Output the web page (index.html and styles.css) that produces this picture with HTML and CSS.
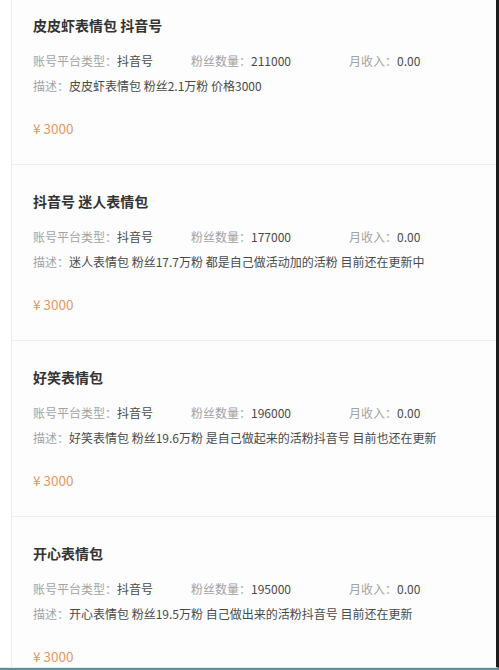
FILE: index.html
```html
<!DOCTYPE html>
<html lang="zh">
<head>
<meta charset="utf-8">
<link rel="stylesheet" href="styles.css">
</head>
<body>
<div class="screen">
  <div class="viewport">
    <div class="list">
      <div class="card">
        <div class="title">皮皮虾表情包 抖音号</div>
        <div class="meta">
          <div><span class="label">账号平台类型：</span><span class="val">抖音号</span></div>
          <div><span class="label">粉丝数量：</span><span class="val">211000</span></div>
          <div><span class="label">月收入：</span><span class="val">0.00</span></div>
        </div>
        <div class="desc"><span class="label">描述：</span><span class="val">皮皮虾表情包 粉丝2.1万粉 价格3000</span></div>
        <div class="price">¥ 3000</div>
      </div>
      <div class="card">
        <div class="title">抖音号 迷人表情包</div>
        <div class="meta">
          <div><span class="label">账号平台类型：</span><span class="val">抖音号</span></div>
          <div><span class="label">粉丝数量：</span><span class="val">177000</span></div>
          <div><span class="label">月收入：</span><span class="val">0.00</span></div>
        </div>
        <div class="desc"><span class="label">描述：</span><span class="val">迷人表情包 粉丝17.7万粉 都是自己做活动加的活粉 目前还在更新中</span></div>
        <div class="price">¥ 3000</div>
      </div>
      <div class="card">
        <div class="title">好笑表情包</div>
        <div class="meta">
          <div><span class="label">账号平台类型：</span><span class="val">抖音号</span></div>
          <div><span class="label">粉丝数量：</span><span class="val">196000</span></div>
          <div><span class="label">月收入：</span><span class="val">0.00</span></div>
        </div>
        <div class="desc"><span class="label">描述：</span><span class="val">好笑表情包 粉丝19.6万粉 是自己做起来的活粉抖音号 目前也还在更新</span></div>
        <div class="price">¥ 3000</div>
      </div>
      <div class="card">
        <div class="title">开心表情包</div>
        <div class="meta">
          <div><span class="label">账号平台类型：</span><span class="val">抖音号</span></div>
          <div><span class="label">粉丝数量：</span><span class="val">195000</span></div>
          <div><span class="label">月收入：</span><span class="val">0.00</span></div>
        </div>
        <div class="desc"><span class="label">描述：</span><span class="val">开心表情包 粉丝19.5万粉 自己做出来的活粉抖音号 目前还在更新</span></div>
        <div class="price">¥ 3000</div>
      </div>
    </div>
  </div>
  <div class="bottom-bar"></div>
</div>
</body>
</html>
```
FILE: styles.css
```css
html, body {
  margin: 0;
  padding: 0;
  background: #ffffff;
}
body {
  font-family: "Noto Sans CJK SC", "Noto Sans", sans-serif;
  color: #333;
}
.screen {
  height: 670px;
  display: flex;
  flex-direction: column;
  overflow: hidden;
}
.viewport {
  flex: 1;
  overflow: hidden;
  border-right: 3px solid #1c1c1c;
  border-bottom: 1px solid #dfe9ea;
}
.list {
  margin-left: 11px;
  margin-top: -11px;
  border-left: 1px solid #ececec;
  background: #fdfdfd;
  min-height: 800px;
}
.card {
  padding: 26px 0 26px 21px;
  border-bottom: 1px solid #efefef;
}
.title {
  font-size: 14px;
  line-height: 20px;
  font-weight: 700;
  color: #333;
}
.meta {
  display: grid;
  grid-template-columns: 158px 158px auto;
  margin-top: 16px;
  font-size: 12px;
  line-height: 20px;
}
.desc {
  margin-top: 5px;
  font-size: 12px;
  line-height: 20px;
}
.label {
  color: #a3a3a3;
}
.val {
  color: #4a4a4a;
}
.price {
  margin-top: 22px;
  font-size: 13.5px;
  line-height: 20px;
  color: #e5965f;
}
.bottom-bar {
  height: 2px;
  background: #5d8f9a;
  flex: none;
}
```
